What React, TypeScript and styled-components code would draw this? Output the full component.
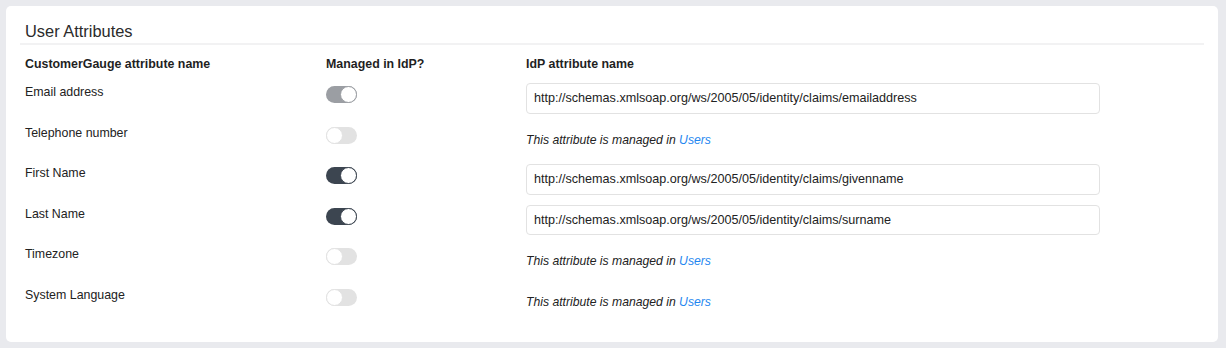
import React from "react";
import styled, { createGlobalStyle } from "styled-components";

const Global = createGlobalStyle`
  html, body { margin: 0; padding: 0; background: #e9eaee; }
  body { font-family: "Liberation Sans", Arial, sans-serif; color: #222; }
  * { box-sizing: border-box; }
`;

const Page = styled.div`
  padding: 6px 8px 6px 6px;
`;

const Card = styled.section`
  background: #fff;
  border-radius: 5px;
  padding: 15px 14px 26px 14px;
  min-height: 336px;
`;

const Title = styled.h2`
  margin: 0;
  font-size: 16.4px;
  font-weight: 400;
  line-height: 20px;
  color: #2b2b2b;
  padding: 0 0 2px 5px;
  border-bottom: 2px solid #f2f2f3;
`;

const Table = styled.div`
  display: grid;
  grid-template-columns: 301px 200px 574px;
  row-gap: 10px;
  padding: 9px 0 0 5px;
`;

const HeadCell = styled.div`
  font-size: 12.4px;
  font-weight: 700;
  line-height: 18px;
  color: #1f1f1f;
  padding-top: 1px;
`;

const Label = styled.div`
  font-size: 12.4px;
  line-height: 17px;
  height: 30.5px;
  padding-top: 1px;
  color: #222;
`;

const ToggleCell = styled.div`
  height: 30.5px;
  padding-top: 3px;
`;

type TrackProps = { $state: "dark" | "grey" | "off" };

const Track = styled.span<TrackProps>`
  position: relative;
  display: block;
  width: 31px;
  height: 17px;
  border-radius: 9px;
  background: ${(p) =>
    p.$state === "dark" ? "#3c4550" : p.$state === "grey" ? "#9b9ea3" : "#e2e2e2"};
`;

const Knob = styled.span<TrackProps>`
  position: absolute;
  top: 0;
  ${(p) => (p.$state === "off" ? "left: 0;" : "right: 0;")}
  width: 17px;
  height: 17px;
  border-radius: 50%;
  background: #fff;
  border: 1px solid ${(p) => (p.$state === "off" ? "#e2e2e2" : p.$state === "grey" ? "#9b9ea3" : "#3c4550")};
`;

const ValueCell = styled.div`
  height: 30.5px;
`;

const Input = styled.input`
  display: block;
  width: 100%;
  height: 30.5px;
  border: 1px solid #e2e2e2;
  border-radius: 4px;
  padding: 0 7px;
  font-family: "Liberation Sans", Arial, sans-serif;
  font-size: 12.6px;
  color: #222;
  background: #fff;
  outline: none;
`;

const Note = styled.div`
  font-size: 12.2px;
  font-style: italic;
  line-height: 30.5px;
  color: #222;
  padding-top: 1px;
`;

const Link = styled.a`
  color: #1f87f0;
  text-decoration: none;
`;

type Row = { name: string; state: "dark" | "grey" | "off"; value?: string };

const rows: Row[] = [
  { name: "Email address", state: "grey", value: "http://schemas.xmlsoap.org/ws/2005/05/identity/claims/emailaddress" },
  { name: "Telephone number", state: "off" },
  { name: "First Name", state: "dark", value: "http://schemas.xmlsoap.org/ws/2005/05/identity/claims/givenname" },
  { name: "Last Name", state: "dark", value: "http://schemas.xmlsoap.org/ws/2005/05/identity/claims/surname" },
  { name: "Timezone", state: "off" },
  { name: "System Language", state: "off" },
];

export default function App() {
  return (
    <>
      <Global />
      <Page>
        <Card>
          <Title>User Attributes</Title>
          <Table>
            <HeadCell>CustomerGauge attribute name</HeadCell>
            <HeadCell>Managed in IdP?</HeadCell>
            <HeadCell>IdP attribute name</HeadCell>
            {rows.map((r) => (
              <React.Fragment key={r.name}>
                <Label>{r.name}</Label>
                <ToggleCell>
                  <Track $state={r.state}>
                    <Knob $state={r.state} />
                  </Track>
                </ToggleCell>
                <ValueCell>
                  {r.value ? (
                    <Input defaultValue={r.value} readOnly />
                  ) : (
                    <Note>
                      This attribute is managed in <Link href="#">Users</Link>
                    </Note>
                  )}
                </ValueCell>
              </React.Fragment>
            ))}
          </Table>
        </Card>
      </Page>
    </>
  );
}
